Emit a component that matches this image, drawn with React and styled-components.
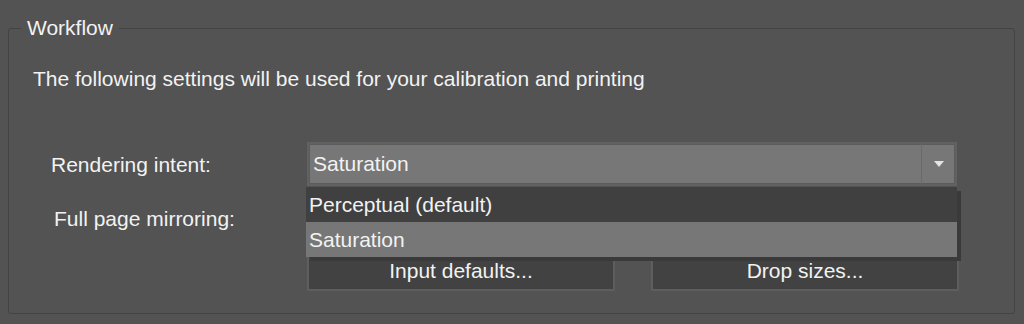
import React from 'react';
import styled, { createGlobalStyle } from 'styled-components';

const GlobalStyle = createGlobalStyle`
  html, body {
    margin: 0;
    padding: 0;
    background: #535353;
  }
  body {
    font-family: "Liberation Sans", Arial, sans-serif;
    color: #f2f2f2;
  }
`;

const Page = styled.div`
  width: 1024px;
  height: 324px;
  padding: 18px 9px 0 8px;
  box-sizing: border-box;
`;

const Frame = styled.fieldset`
  margin: 0;
  height: 296px;
  box-sizing: border-box;
  border: 1px solid #434343;
  border-radius: 3px;
  padding: 0;
`;

const Legend = styled.legend`
  margin-left: 12px;
  padding: 0 6px;
  font-size: 21px;
  line-height: 20px;
`;

const Intro = styled.p`
  margin: 30px 0 0 24px;
  font-size: 21px;
  line-height: 22px;
`;

const Form = styled.div`
  margin-top: 52px;
  display: grid;
  grid-template-columns: 298px 650px;
  row-gap: 10px;
  position: relative;
`;

const Label = styled.div`
  display: flex;
  align-items: center;
  padding-left: ${(p) => p.$indent}px;
  padding-top: 2px;
  font-size: 21px;
  height: 44px;
  box-sizing: border-box;
`;

const Combo = styled.div`
  height: 44px;
  box-sizing: border-box;
  border: 2px solid #616161;
  display: flex;
  background: #777777;
  box-shadow: inset 0 0 0 1px #5c5c5c;
`;

const ComboValue = styled.div`
  flex: 1;
  display: flex;
  align-items: center;
  padding-left: 4px;
  font-size: 21px;
`;

const ArrowCell = styled.div`
  width: 33px;
  border-left: 1px solid #6a6a6a;
  display: flex;
  align-items: center;
  justify-content: center;
`;

const Arrow = styled.div`
  width: 0;
  height: 0;
  border-left: 5px solid transparent;
  border-right: 5px solid transparent;
  border-top: 6px solid #e4e4e4;
`;

const Buttons = styled.div`
  grid-column: 2;
  display: flex;
  gap: 36px;
  margin-right: -2px;
`;

const Button = styled.button`
  flex: 1;
  height: 41px;
  background: #424242;
  border: 2px solid #5e5e5e;
  color: #f2f2f2;
  font-family: inherit;
  font-size: 21px;
  padding: 0;
`;

const List = styled.ul`
  position: absolute;
  top: 45px;
  left: 297px;
  width: 651px;
  margin: 0;
  padding: 0;
  list-style: none;
  box-shadow: 4px 4px 0 #3a3a3a;
`;

const Item = styled.li`
  height: 35px;
  display: flex;
  align-items: center;
  padding-left: 3px;
  font-size: 21px;
  background: ${(p) => (p.$selected ? '#777777' : '#404040')};
`;

export default function App() {
  return (
    <>
      <GlobalStyle />
      <Page>
        <Frame>
          <Legend>Workflow</Legend>
          <Intro>The following settings will be used for your calibration and printing</Intro>
          <Form>
            <Label $indent={42}>Rendering intent:</Label>
            <Combo>
              <ComboValue>Saturation</ComboValue>
              <ArrowCell>
                <Arrow />
              </ArrowCell>
            </Combo>
            <Label $indent={45}>Full page mirroring:</Label>
            <Combo>
              <ComboValue />
              <ArrowCell>
                <Arrow />
              </ArrowCell>
            </Combo>
            <Buttons>
              <Button>Input defaults...</Button>
              <Button>Drop sizes...</Button>
            </Buttons>
            <List>
              <Item>Perceptual (default)</Item>
              <Item $selected>Saturation</Item>
            </List>
          </Form>
        </Frame>
      </Page>
    </>
  );
}
